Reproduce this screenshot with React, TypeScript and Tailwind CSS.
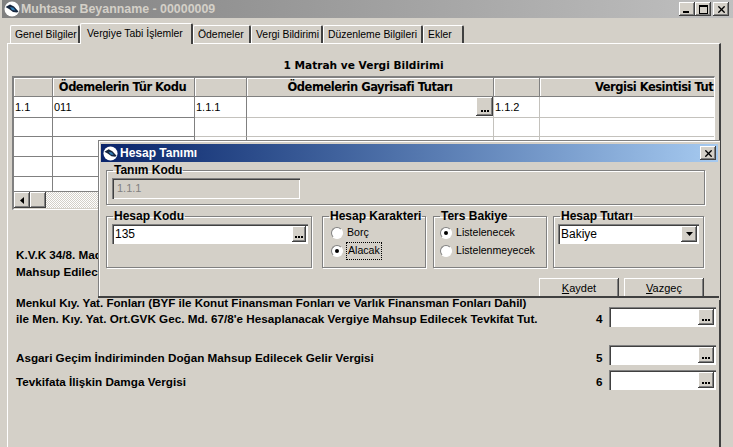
import type { ReactNode } from "react";
import { X } from "lucide-react";

const raised = "bg-[#d4d0c8] shadow-[inset_-1px_-1px_0_#404040,inset_1px_1px_0_#ffffff,inset_-2px_-2px_0_#808080]";
const sunken = "shadow-[inset_1px_1px_0_#808080,inset_2px_2px_0_#404040,inset_-1px_-1px_0_#ffffff]";
const bold = "font-['DejaVu_Sans',sans-serif] font-bold";
const narrowBold = "font-['Liberation_Sans',sans-serif] font-bold";

const Logo = ({ size }: { size: number }) => (
  <svg width={size} height={size} viewBox="0 0 16 16" className="shrink-0">
    <circle cx="8" cy="8" r="7.5" fill="#ffffff" />
    <path d="M1.5 6 L6 3.5 L10 5.5 L14.5 10.5 L13 11.5 L9 11 L5 8 Z" fill="#16263f" />
    <path d="M6 6 L9.5 6.8 L11.5 9.5 L8 9 Z" fill="#2f7fb8" />
  </svg>
);

const DotsButton = ({ className }: { className: string }) => (
  <div className={`${raised} ${className} shrink-0 flex items-end justify-center pb-[4px] gap-px`}>
    <span className="w-[2px] h-[2px] bg-black" />
    <span className="w-[2px] h-[2px] bg-black" />
    <span className="w-[2px] h-[2px] bg-black" />
  </div>
);

const Tab = ({ label, width, active }: { label: string; width: number; active?: boolean }) => (
  <div
    style={{ width }}
    className={
      active
        ? "h-[21px] relative z-10 -mb-px bg-[#d4d0c8] border-t border-l border-white border-r-2 border-r-[#404040] rounded-t-[2px] pl-[6px] pt-[2px] whitespace-nowrap text-[10.4px]"
        : "h-[18px] bg-[#d4d0c8] border-t border-l border-white border-r-2 border-r-[#404040] rounded-t-[2px] pl-[4px] pt-[1px] whitespace-nowrap text-[10.4px]"
    }
  >
    {label}
  </div>
);

const Group = ({ title, className, pad, children }: { title: string; className: string; pad: string; children: ReactNode }) => (
  <fieldset className={`border border-[#808080] shadow-[1px_1px_0_#ffffff,inset_1px_1px_0_#ffffff] ${className}`}>
    <legend className={`${narrowBold} ml-[6px] px-px text-[12px] leading-[14px] text-black whitespace-nowrap`}>{title}</legend>
    <div className={pad}>{children}</div>
  </fieldset>
);

const Radio = ({ label, checked, focus }: { label: string; checked?: boolean; focus?: boolean }) => (
  <div className="h-[18px] flex items-center gap-[4px] text-[10.6px]">
    <span className="w-[12px] h-[12px] rounded-full bg-white border border-[#808080] border-r-white border-b-white flex items-center justify-center">
      {checked && <span className="w-[4px] h-[4px] rounded-full bg-black" />}
    </span>
    <span className={focus ? "outline-1 outline-dotted outline-black px-px" : ""}>{label}</span>
  </div>
);

const columns = "grid grid-cols-[39px_142px_52px_247px_46px_176px]";
const dark = "border-r border-b border-[#808080]";
const light = "border-r border-b border-[#c4c2bd]";

const Row = ({ cells, height = "h-5" }: { cells?: ReactNode[]; height?: string }) => (
  <div className={`${columns} ${height} bg-white`}>
    <div className={`${dark} pl-px leading-[20px]`}>{cells?.[0]}</div>
    <div className={`${dark} pl-px leading-[20px]`}>{cells?.[1]}</div>
    <div className={`${light} !border-r-[#808080] pl-px leading-[20px]`}>{cells?.[2]}</div>
    <div className={`${light} flex justify-end`}>{cells?.[3]}</div>
    <div className={`${light} pl-px leading-[20px]`}>{cells?.[4]}</div>
    <div className={light} />
  </div>
);

const HeaderCell = ({ children, className }: { children?: ReactNode; className?: string }) => (
  <div className={`h-[19px] bg-[#d4d0c8] border-r border-b border-r-[#808080] border-b-[#808080] shadow-[inset_1px_1px_0_#ffffff] ${bold} text-[11.5px] tracking-[-0.5px] leading-[18px] whitespace-nowrap ${className ?? ""}`}>
    {children}
  </div>
);

const AmountRow = ({ label, num, className }: { label: string; num: string; className: string }) => (
  <div className={`flex items-center ${className}`}>
    <span className={`w-[580px] pt-[4px] whitespace-nowrap ${narrowBold} text-[11.7px]`}>{label}</span>
    <span className={`w-[13px] pt-[4px] ${narrowBold} text-[11.7px]`}>{num}</span>
    <div className={`w-[107px] h-[20px] bg-white ${sunken} flex justify-end items-center pr-[2px]`}>
      <DotsButton className="w-4 h-4" />
    </div>
  </div>
);

export default function App() {
  return (
    <div className="relative w-[733px] h-[447px] overflow-hidden flex flex-col bg-[#d4d0c8] text-black text-[11px] font-['Liberation_Sans',sans-serif]">
      {/* Ana pencere başlığı */}
      <div className="h-[18px] shrink-0 ml-[2px] flex items-center bg-gradient-to-r from-[#808080] to-[#c0c0c0] pl-[2px] pr-[4px]">
        <Logo size={16} />
        <span className={`${narrowBold} ml-[1px] text-[12.4px] text-[#d4d0c8] whitespace-nowrap`}>Muhtasar Beyanname - 00000009</span>
        <div className="ml-auto flex">
          <div className={`${raised} w-4 h-[14px] flex items-end pl-[4px] pb-[3px]`}><span className="w-[6px] h-[2px] bg-black" /></div>
          <div className={`${raised} w-4 h-[14px] flex items-center justify-center`}><span className="w-[9px] h-[9px] border border-t-2 border-black" /></div>
          <div className={`${raised} w-4 h-[14px] ml-[2px] flex items-center justify-center`}><X size={11} strokeWidth={3} /></div>
        </div>
      </div>

      {/* Sekmeler */}
      <div className="h-[25px] shrink-0 pl-[10px] flex items-end">
        <Tab label="Genel Bilgiler" width={70} />
        <Tab label="Vergiye Tabi İşlemler" width={113} active />
        <Tab label="Ödemeler" width={58} />
        <Tab label="Vergi Bildirimi" width={72} />
        <Tab label="Düzenleme Bilgileri" width={100} />
        <Tab label="Ekler" width={41} />
      </div>

      {/* Sekme içeriği */}
      <div className="ml-[7px] w-[714px] grow flex flex-col border-l border-t border-white border-r-2 border-r-[#404040]">
        <div className={`${bold} h-[32px] shrink-0 pt-[13px] text-[10.6px] leading-[16px] text-center whitespace-nowrap`}>1 Matrah ve Vergi Bildirimi</div>

        <div className="ml-[4px] w-[703px] h-[134px] shrink-0 overflow-hidden border-l-2 border-t-2 border-[#808080] border-r border-b border-r-white border-b-white">
          <div className={columns}>
            <HeaderCell />
            <HeaderCell className="text-center pr-[2px]">Ödemelerin Tür Kodu</HeaderCell>
            <HeaderCell />
            <HeaderCell className="text-center">Ödemelerin Gayrisafi Tutarı</HeaderCell>
            <HeaderCell />
            <HeaderCell className="pl-[55px]">Vergisi Kesintisi Tut</HeaderCell>
          </div>
          <Row cells={["1.1", "011", "1.1.1", <DotsButton key="d" className="w-[17px] h-[19px]" />, "1.1.2"]} />
          <Row />
          <Row />
          <Row />
          <Row height="h-[15px]" />
          <div className="flex h-4 bg-[repeating-conic-gradient(#ffffff_0_25%,#d4d0c8_0_50%)] bg-[length:2px_2px]">
            <div className={`${raised} w-4 h-4 flex items-center justify-center`}>
              <svg width="4" height="7" viewBox="0 0 4 7"><path d="M4 0 L0 3.5 L4 7 Z" fill="#000" /></svg>
            </div>
            <div className={`${raised} w-4 h-4`} />
          </div>
        </div>

        <div className={`shrink-0 pl-[8px] pt-[36px] ${narrowBold} text-[11.7px] leading-[17px] whitespace-nowrap`}>
          <div>K.V.K 34/8. Madde</div>
          <div>Mahsup Edilecek</div>
        </div>

        {/* Alt bölüm, diyalog penceresinin altını keser */}
        <div className="relative z-20 mt-[16px] grow bg-[#d4d0c8] flex flex-col">
          <div className="ml-[90px] h-[2px] bg-[#404040] shrink-0" />
          <div className={`pl-[8px] -mt-px ${narrowBold} text-[11.6px] leading-[12px] whitespace-nowrap`}>Menkul Kıy. Yat. Fonları (BYF ile Konut Finansman Fonları ve Varlık Finansman Fonları Dahil)</div>
          <AmountRow className="pl-[8px] mt-[-3px]" num="4" label="ile Men. Kıy. Yat. Ort.GVK Gec. Md. 67/8'e Hesaplanacak Vergiye Mahsup Edilecek Tevkifat Tut." />
          <AmountRow className="pl-[8px] mt-[17px]" num="5" label="Asgari Geçim İndiriminden Doğan Mahsup Edilecek Gelir Vergisi" />
          <AmountRow className="pl-[8px] mt-[3px]" num="6" label="Tevkifata İlişkin Damga Vergisi" />
        </div>
      </div>

      {/* Hesap Tanımı diyaloğu */}
      <div className="absolute z-10 left-[98px] top-[140px] w-[622px] h-[160px] bg-[#d4d0c8] border-l border-t border-[#808080] shadow-[inset_1px_1px_0_#ffffff] pl-[2px] pt-[3px] pr-[2px] flex flex-col">
        <div className="h-[18px] shrink-0 flex items-center bg-gradient-to-r from-[#0a246a] to-[#a6caf0] pl-[2px] pr-[2px]">
          <Logo size={15} />
          <span className={`${narrowBold} ml-[2px] text-[12px] text-white whitespace-nowrap`}>Hesap Tanımı</span>
          <div className={`${raised} ml-auto w-4 h-[14px] flex items-center justify-center`}><X size={11} strokeWidth={3} /></div>
        </div>

        <div className="pl-[5px] pt-[1px] flex flex-col">
          <Group title="Tanım Kodu" className="w-[599px] h-[42px]" pad="pl-[5px] pt-[1px]">
            <div className={`w-[188px] h-[21px] ${sunken} pl-[5px] leading-[21px] text-[#808080]`}>1.1.1</div>
          </Group>

          <div className="flex mt-[4px]">
            <Group title="Hesap Kodu" className="w-[206px] h-[59px]" pad="pl-[5px] pt-[1px]">
              <div className={`w-[196px] h-[20px] bg-white ${sunken} flex items-center justify-between pl-[3px] pr-[2px] text-[12px]`}>
                135
                <DotsButton className="w-[14px] h-4" />
              </div>
            </Group>
            <Group title="Hesap Karakteri" className="ml-[10px] w-[104px] h-[59px]" pad="pl-[8px] pt-[1px]">
              <Radio label="Borç" />
              <Radio label="Alacak" checked focus />
            </Group>
            <Group title="Ters Bakiye" className="ml-[7px] w-[114px] h-[59px]" pad="pl-[6px] pt-[1px]">
              <Radio label="Listelenecek" checked />
              <Radio label="Listelenmeyecek" />
            </Group>
            <Group title="Hesap Tutarı" className="ml-[6px] w-[151px] h-[59px]" pad="pl-[4px] pt-[1px]">
              <div className={`w-[141px] h-[20px] bg-white ${sunken} flex items-center justify-between pl-[3px] pr-[2px] text-[12px]`}>
                Bakiye
                <div className={`${raised} w-4 h-4 flex items-center justify-center`}>
                  <svg width="7" height="4" viewBox="0 0 7 4"><path d="M0 0 H7 L3.5 4 Z" fill="#000" /></svg>
                </div>
              </div>
            </Group>
          </div>

          <div className="flex justify-end gap-[5px] mt-[10px] pr-[14px]">
            <div className={`${raised} w-[80px] h-[24px] text-center text-[11px] leading-[20px]`}><span className="underline">K</span>aydet</div>
            <div className={`${raised} w-[80px] h-[24px] text-center text-[11px] leading-[20px]`}><span className="underline">V</span>azgeç</div>
          </div>
        </div>
      </div>
    </div>
  );
}
